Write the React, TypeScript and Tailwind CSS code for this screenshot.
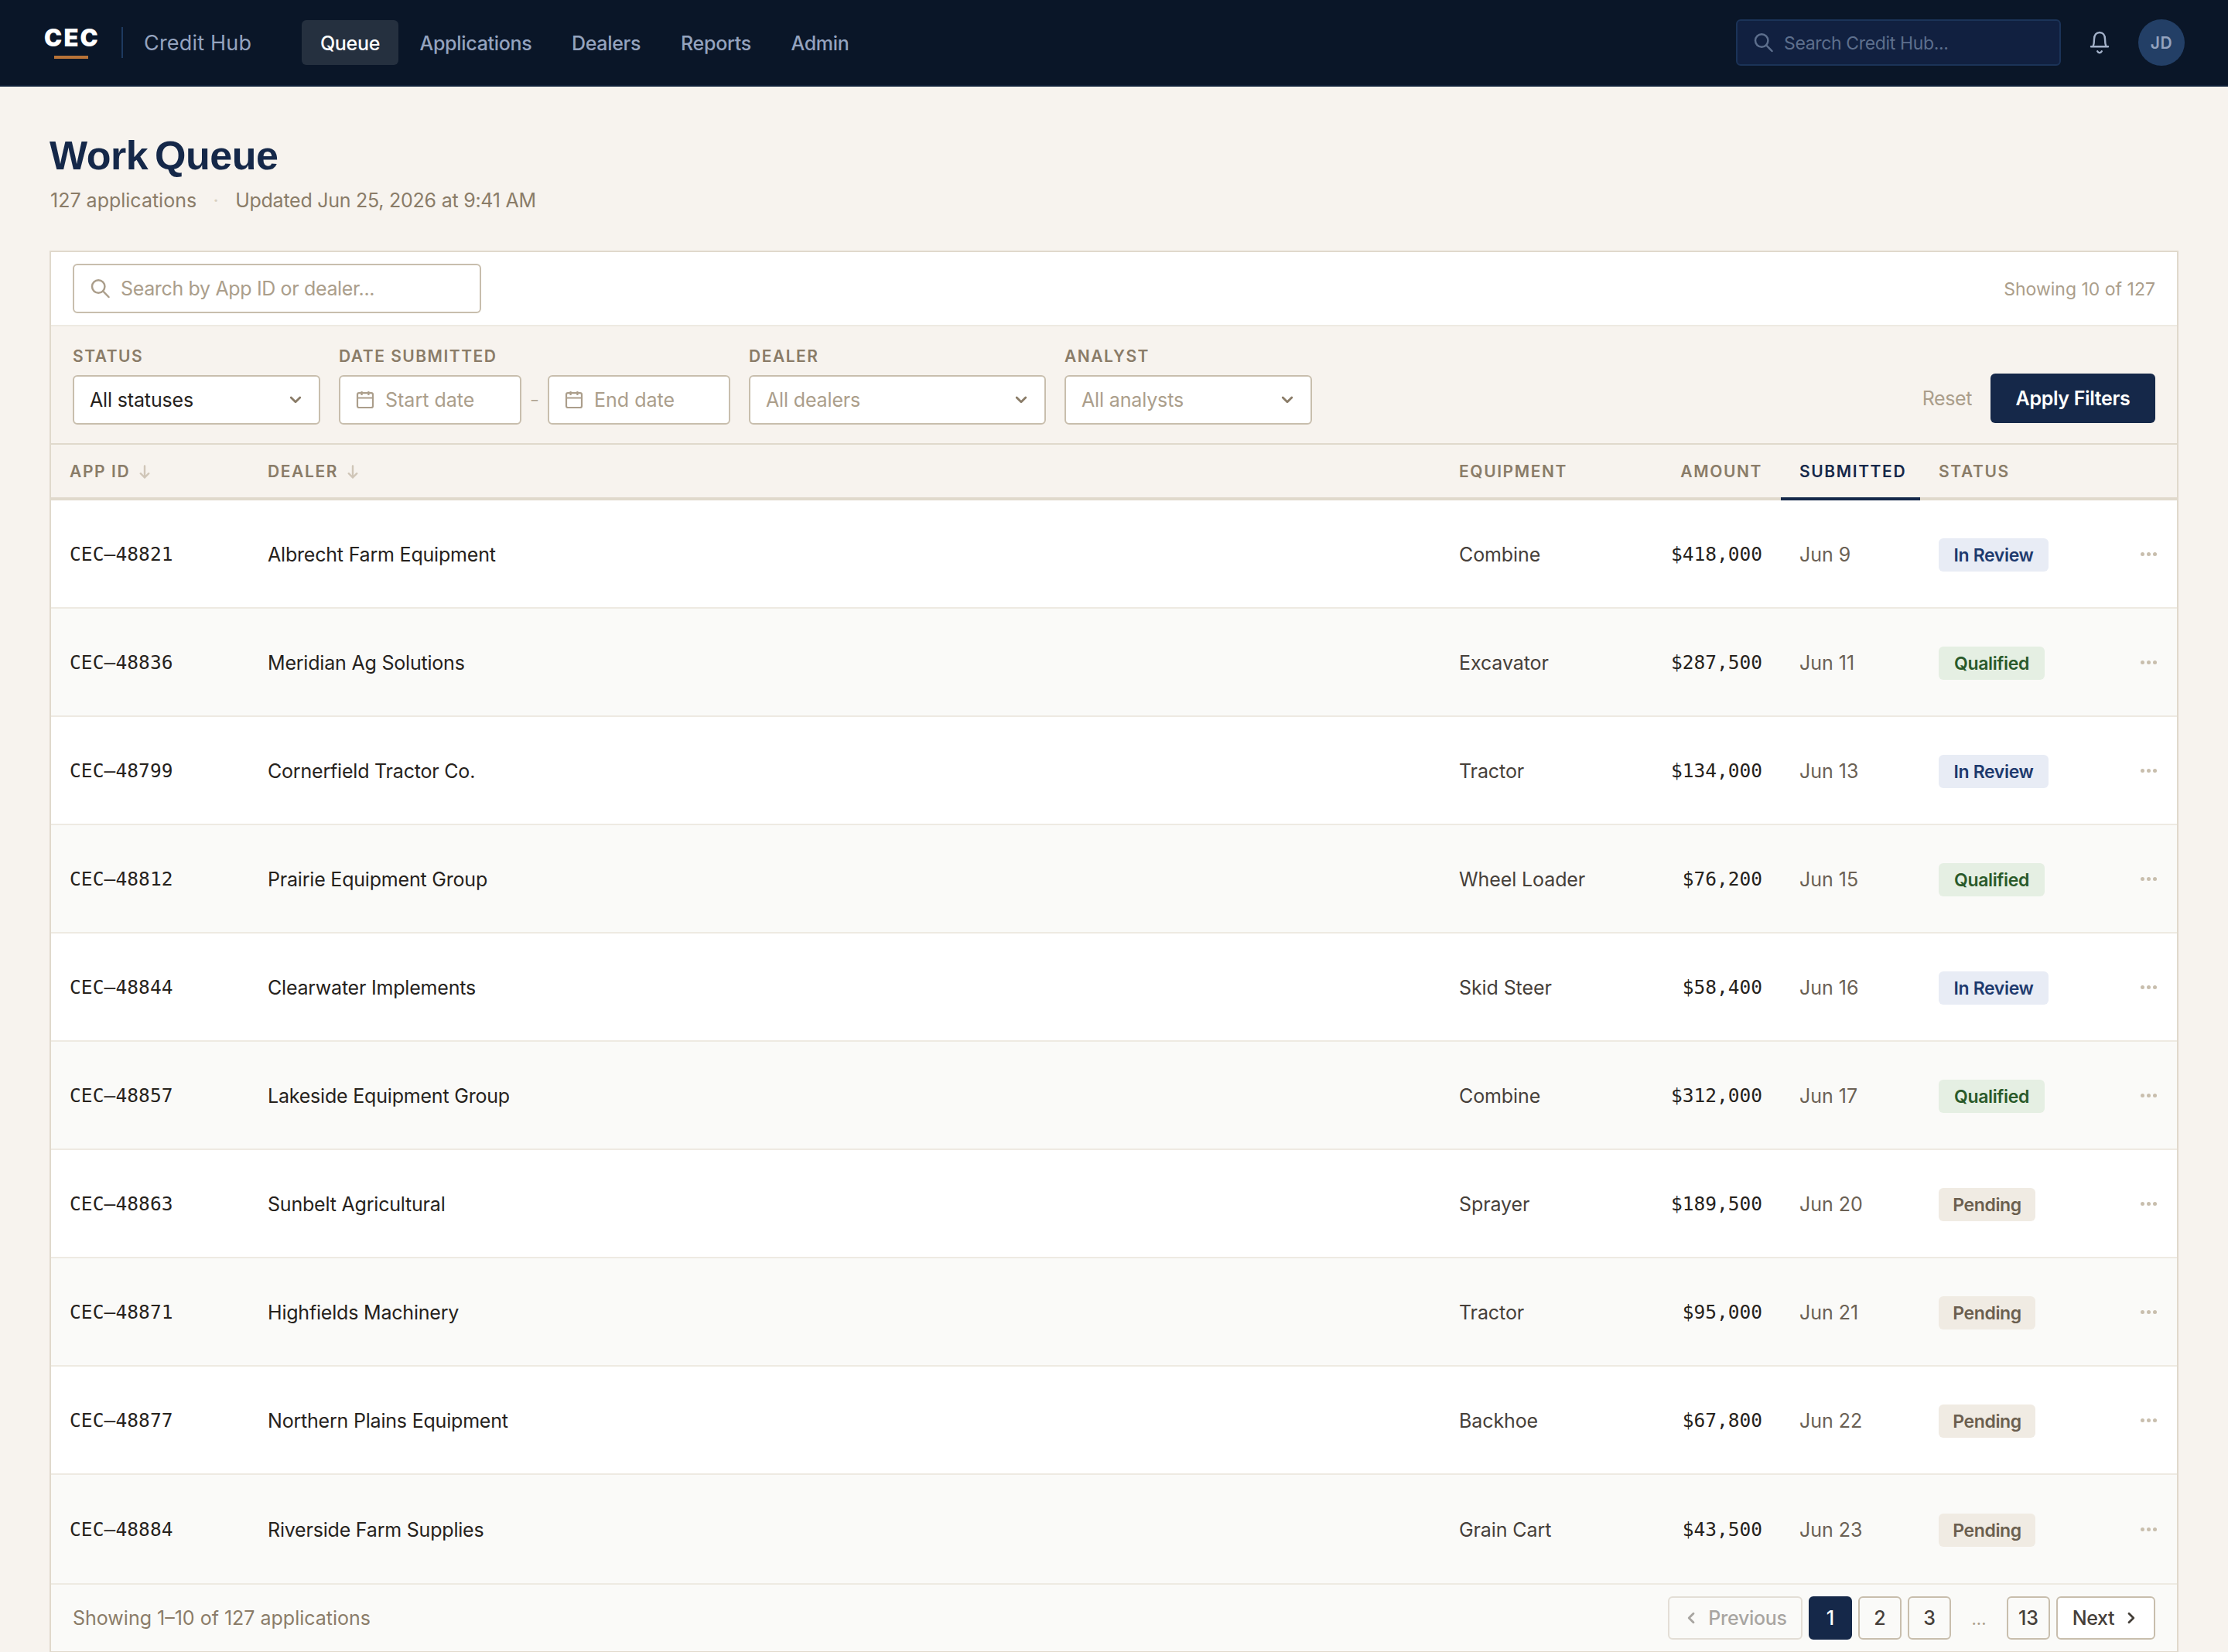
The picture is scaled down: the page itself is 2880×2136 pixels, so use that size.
import type { ReactNode } from "react";
import clsx from "clsx";

type Status = "In Review" | "Qualified" | "Pending";

type Application = {
  id: string;
  dealer: string;
  equipment: string;
  amount: string;
  submitted: string;
  status: Status;
};

const applications: Application[] = [
  { id: "CEC–48821", dealer: "Albrecht Farm Equipment", equipment: "Combine", amount: "$418,000", submitted: "Jun 9", status: "In Review" },
  { id: "CEC–48836", dealer: "Meridian Ag Solutions", equipment: "Excavator", amount: "$287,500", submitted: "Jun 11", status: "Qualified" },
  { id: "CEC–48799", dealer: "Cornerfield Tractor Co.", equipment: "Tractor", amount: "$134,000", submitted: "Jun 13", status: "In Review" },
  { id: "CEC–48812", dealer: "Prairie Equipment Group", equipment: "Wheel Loader", amount: "$76,200", submitted: "Jun 15", status: "Qualified" },
  { id: "CEC–48844", dealer: "Clearwater Implements", equipment: "Skid Steer", amount: "$58,400", submitted: "Jun 16", status: "In Review" },
  { id: "CEC–48857", dealer: "Lakeside Equipment Group", equipment: "Combine", amount: "$312,000", submitted: "Jun 17", status: "Qualified" },
  { id: "CEC–48863", dealer: "Sunbelt Agricultural", equipment: "Sprayer", amount: "$189,500", submitted: "Jun 20", status: "Pending" },
  { id: "CEC–48871", dealer: "Highfields Machinery", equipment: "Tractor", amount: "$95,000", submitted: "Jun 21", status: "Pending" },
  { id: "CEC–48877", dealer: "Northern Plains Equipment", equipment: "Backhoe", amount: "$67,800", submitted: "Jun 22", status: "Pending" },
  { id: "CEC–48884", dealer: "Riverside Farm Supplies", equipment: "Grain Cart", amount: "$43,500", submitted: "Jun 23", status: "Pending" },
];

const navItems = [
  { label: "Queue", width: "w-[125px]" },
  { label: "Applications", width: "w-[192px]" },
  { label: "Dealers", width: "w-[137px]" },
  { label: "Reports", width: "w-[139px]" },
  { label: "Admin", width: "w-[122px]" },
];

const badgeStyles: Record<Status, string> = {
  "In Review": "w-[142px] bg-[#e8ecf5] text-[#1e3a6e]",
  Qualified: "w-[137px] bg-[#e5efe3] text-[#2a5a2a]",
  Pending: "w-[125px] bg-[#f0ebe3] text-[#6b5f4f]",
};

const columns = "grid grid-cols-[256px_1fr_240px_200px_180px_252px_80px]";

function SearchIcon({ className }: { className?: string }) {
  return (
    <svg viewBox="0 0 28 28" className={clsx("size-7 shrink-0", className)} fill="none" stroke="currentColor" strokeWidth="2.5" strokeLinecap="round">
      <circle cx="11.2" cy="11.5" r="8.2" />
      <path d="M17.2 17.500 24.500 25" />
    </svg>
  );
}

function CalendarIcon() {
  return (
    <svg viewBox="0 0 24 24" className="size-6 shrink-0" fill="none" stroke="currentColor" strokeWidth="2.2">
      <rect x="2" y="3.2" width="20" height="18.8" rx="2" />
      <path d="M2 9.5h20M7.6 1v5M16.4 1v5" />
    </svg>
  );
}

function Chevron({ className }: { className?: string }) {
  return (
    <svg viewBox="0 0 20 20" className={clsx("size-5 shrink-0", className)} fill="none" stroke="currentColor" strokeWidth="2.8" strokeLinecap="round" strokeLinejoin="round">
      <path d="m4.2 7 5.8 5.8L15.8 7" />
    </svg>
  );
}

function SortArrow() {
  return (
    <svg viewBox="0 0 14 18" className="ml-[12px] h-[18px] w-[14px]" fill="none" stroke="#d0c6b8" strokeWidth="2.4" strokeLinecap="round" strokeLinejoin="round">
      <path d="M7 1.5v15M1.8 11.2 7 16.5l5.2-5.3" />
    </svg>
  );
}

function BellIcon() {
  return (
    <svg viewBox="0 0 28 32" className="h-8 w-7" fill="none" stroke="#a3b1c9" strokeWidth="2.4" strokeLinecap="round" strokeLinejoin="round">
      <path d="M3 21.2h22M5.6 21c1-2.6 1.4-5.4 1.4-9.5C7 6.4 9.8 3 14 3s7 3.4 7 8.5c0 4.1.4 6.9 1.4 9.5" />
      <path d="M11.2 27.2c.7 1.4 1.6 2 2.8 2s2.1-.6 2.8-2" />
    </svg>
  );
}

function TopBar() {
  return (
    <header className="flex h-28 items-center border-b-2 border-[#0f2038] bg-[#0a1628] pr-14 pl-14">
      <div className="flex w-[72px] flex-col items-center">
        <span className="-mr-[2px] text-[31px] leading-[30px] font-black tracking-[2.2px] text-white">CEC</span>
        <span className="mt-2 h-1 w-11 bg-[#b87338]" />
      </div>
      <span className="ml-[29px] h-10 w-0.5 bg-[#1e3a5f]" />
      <span className="ml-[27px] w-[141px] pt-0.5 text-[27px] tracking-[0.2px] whitespace-nowrap text-[#94a3bf]">Credit Hub</span>
      <nav className="ml-[63px] flex gap-1">
        {navItems.map((item, i) => (
          <a
            key={item.label}
            className={clsx(
              "flex h-[58px] items-center justify-center rounded-md pt-[3px] text-[25px] font-medium tracking-[-0.3px]",
              item.width,
              i === 0 ? "bg-[#25303f] text-white" : "text-[#94a3bf]",
            )}
          >
            {item.label}
          </a>
        ))}
      </nav>
      <div className="ml-auto flex items-center">
        <div className="flex h-[60px] w-[420px] items-center gap-3 rounded-md border-2 border-[#1b3358] bg-[#112040] pl-5 text-[23px] tracking-[-0.35px] text-[#5d6f8d]">
          <SearchIcon />
          <span className="pt-0.5">Search Credit Hub...</span>
        </div>
        <span className="ml-9">
          <BellIcon />
        </span>
        <span className="ml-9 flex size-[60px] items-center justify-center rounded-full bg-[#233f66] pt-0.5 text-[21px] font-semibold tracking-[0.5px] text-[#94a3bf]">JD</span>
      </div>
    </header>
  );
}

function Field({ label, children }: { label: string; children: ReactNode }) {
  return (
    <div>
      <div className="mb-[11px] text-[21px] leading-[26px] font-semibold tracking-[1.5px] text-[#8a7c68]">{label}</div>
      <div className="flex items-center">{children}</div>
    </div>
  );
}

const control = "flex h-16 items-center rounded-md border-2 border-[#c8bead] bg-white text-[25px]";

function Select({ value, className }: { value: string; className: string }) {
  return (
    <div className={clsx(control, "justify-between pr-5 pl-5", className)}>
      <span className="pt-0.5 tracking-[-0.15px]">{value}</span>
      <Chevron className="text-[#8a7c68]" />
    </div>
  );
}

function DateInput({ placeholder }: { placeholder: string }) {
  return (
    <div className={clsx(control, "w-[236px] gap-3.5 pl-5 text-[#ab9e8b]")}>
      <CalendarIcon />
      <span className="pt-0.5">{placeholder}</span>
    </div>
  );
}

function Filters() {
  return (
    <div className="flex h-[153px] items-end gap-6 border-b-2 border-[#e0d9cc] bg-[#f7f3ee] px-7 pb-6">
      <Field label="STATUS">
        <Select value="All statuses" className="w-80 text-[#26221c]" />
      </Field>
      <Field label="DATE SUBMITTED">
        <DateInput placeholder="Start date" />
        <span className="w-[34px] pt-0.5 text-center text-[17px] font-medium text-[#ab9e8b]">–</span>
        <DateInput placeholder="End date" />
      </Field>
      <Field label="DEALER">
        <Select value="All dealers" className="w-96 text-[#ab9e8b]" />
      </Field>
      <Field label="ANALYST">
        <Select value="All analysts" className="w-80 text-[#ab9e8b]" />
      </Field>
      <div className="mb-0.5 ml-auto flex items-center gap-6">
        <button className="pt-0.5 text-[25px] tracking-[-0.4px] text-[#ab9e8b]">Reset</button>
        <button className="h-16 w-[213px] rounded-md bg-[#152849] pt-0.5 text-[25px] font-semibold tracking-[-0.35px] text-white">Apply Filters</button>
      </div>
    </div>
  );
}

function TableHeader() {
  return (
    <div className={clsx(columns, "h-[72px] bg-[#f7f3ee] text-[21px] font-semibold tracking-[1.6px] text-[#8a7c68] *:flex *:items-center *:border-b-4 *:border-[#e0d9cc] *:px-6 *:pt-0.5")}>
      <div>APP ID<SortArrow /></div>
      <div>DEALER<SortArrow /></div>
      <div>EQUIPMENT</div>
      <div className="justify-end">AMOUNT</div>
      <div className="border-[#152849]! text-[#152849]">SUBMITTED</div>
      <div>STATUS</div>
      <div />
    </div>
  );
}

function Row({ app, last }: { app: Application; last: boolean }) {
  return (
    <div className={clsx(columns, "h-[140px] items-center border-[#eeeae2] text-[25px] even:bg-[#fafaf8] *:px-6 *:pt-[3px]", !last && "border-b-2")}>
      <div className="font-['DejaVu_Sans_Mono',monospace] text-[24.5px] tracking-[0.1px] text-[#26221c]">{app.id}</div>
      <div className="tracking-[-0.2px] text-[#26221c]">{app.dealer}</div>
      <div className="tracking-[-0.1px] text-[#46403a]">{app.equipment}</div>
      <div className="text-right font-['DejaVu_Sans_Mono',monospace] text-[24.5px] text-[#26221c]">{app.amount}</div>
      <div className="text-[#6b6154]">{app.submitted}</div>
      <div>
        <span className={clsx("flex h-[43px] items-center justify-center rounded-md pt-0.5 text-[23px] font-semibold tracking-[-0.35px]", badgeStyles[app.status])}>{app.status}</span>
      </div>
      <div className="flex justify-end gap-[3px]">
        {[0, 1, 2].map((dot) => (
          <span key={dot} className="mb-[3px] size-[5px] rounded-full bg-[#c8bead] last:mr-0.5" />
        ))}
      </div>
    </div>
  );
}

function Pagination() {
  const page = "flex h-14 items-center justify-center rounded-md border-2 border-[#c8bead] text-[25px] font-medium text-[#46403a]";
  return (
    <div className="flex h-[88px] items-center justify-between border-t-2 border-[#eeeae2] bg-[#fafaf8] px-7">
      <span className="pt-0.5 text-[25px] text-[#8a7c68]">Showing 1–10 of 127 applications</span>
      <div className="flex gap-2">
        <button className={clsx(page, "w-[174px] gap-3 opacity-45")}>
          <Chevron className="rotate-90" />
          <span className="pt-0.5 tracking-[-0.3px]">Previous</span>
        </button>
        <button className={clsx(page, "w-14 border-[#152849]! bg-[#152849] pt-0.5 text-white!")}>1</button>
        <button className={clsx(page, "w-14 pt-0.5")}>2</button>
        <button className={clsx(page, "w-14 pt-0.5")}>3</button>
        <span className="flex h-14 w-14 items-center justify-center pt-0.5 text-[22px] text-[#ab9e8b]">...</span>
        <button className={clsx(page, "w-14 pt-0.5")}>13</button>
        <button className={clsx(page, "w-32 gap-3 bg-white")}>
          <span className="pt-0.5 tracking-[-0.4px]">Next</span>
          <Chevron className="-rotate-90" />
        </button>
      </div>
    </div>
  );
}

export default function App() {
  return (
    <div className="h-[2136px] w-[2880px] overflow-hidden bg-[#f7f3ee] font-['Inter','Liberation_Sans',sans-serif]">
      <TopBar />
      <main className="px-16 pt-[57px]">
        <h1 className="font-['Liberation_Sans',sans-serif] text-[52px] leading-[64px] font-bold tracking-[-0.5px] text-[#152849] [word-spacing:-5px]">Work Queue</h1>
        <p className="mt-[9px] flex h-[34px] items-center pt-0.5 pl-px text-[25px] text-[#8a7c68]">
          127 applications
          <span className="w-[50px] text-center text-[#d8cfc0]">·</span>
          <span className="tracking-[-0.25px]">Updated Jun 25, 2026 at 9:41 AM</span>
        </p>
        <section className="mt-12 border-2 border-[#e0d9cc] bg-white">
          <div className="flex h-24 items-center justify-between border-b-2 border-[#eeeae2] px-7">
            <div className={clsx(control, "w-[528px] gap-3 pl-5 text-[#ab9e8b]")}>
              <SearchIcon />
              <span className="pt-0.5 tracking-[-0.35px]">Search by App ID or dealer...</span>
            </div>
            <span className="pt-0.5 text-[23px] text-[#ab9e8b]">Showing 10 of 127</span>
          </div>
          <Filters />
          <TableHeader />
          <div>
            {applications.map((app, i) => (
              <Row key={app.id} app={app} last={i === applications.length - 1} />
            ))}
          </div>
          <Pagination />
        </section>
      </main>
    </div>
  );
}
